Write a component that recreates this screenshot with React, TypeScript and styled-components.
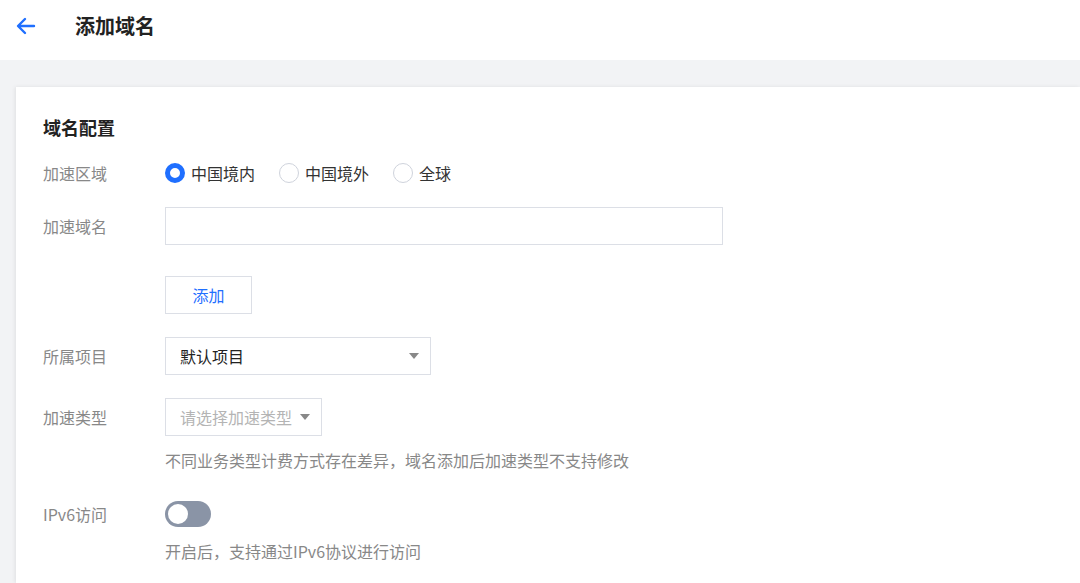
import React, { useState } from 'react';
import styled, { createGlobalStyle } from 'styled-components';

const GlobalStyle = createGlobalStyle`
  html, body {
    margin: 0;
    padding: 0;
    background: #f2f3f5;
    font-family: "Noto Sans CJK SC", "Noto Sans", sans-serif;
    overflow: hidden;
  }
`;

const Page = styled.div`
  width: 1080px;
  height: 583px;
  display: flex;
  flex-direction: column;
  background: #f2f3f5;
  overflow: hidden;
`;

const Header = styled.div`
  height: 60px;
  flex-shrink: 0;
  background: #fff;
  display: flex;
  align-items: flex-start;
  box-sizing: border-box;
  padding: 14px 0 0 15px;
  gap: 38px;
`;

const BackButton = styled.button`
  border: none;
  background: none;
  padding: 0;
  display: flex;
  margin-top: 1px;
  cursor: pointer;
`;

const Title = styled.h1`
  margin: 0;
  font-size: 20px;
  line-height: 24px;
  font-weight: 700;
  color: #222;
`;

const Body = styled.div`
  padding: 27px 0 0 16px;
  flex: 1;
  min-height: 0;
`;

const Card = styled.div`
  background: #fff;
  height: 100%;
  padding: 26px 0 0 27px;
  box-shadow: -1px 0 4px rgba(0, 0, 0, 0.08);
  box-sizing: border-box;
`;

const SectionTitle = styled.h2`
  margin: 0 0 22px;
  font-size: 18px;
  font-weight: 700;
  color: #222;
  line-height: 28px;
`;

const Row = styled.div<{ $gap?: number }>`
  display: grid;
  grid-template-columns: 122px 1fr;
  align-items: start;
  margin-bottom: ${(p) => p.$gap ?? 23}px;
`;

const Label = styled.div<{ $h?: number }>`
  font-size: 16px;
  color: #888;
  line-height: ${(p) => p.$h ?? 38}px;
`;

const Control = styled.div`
  display: flex;
  flex-direction: column;
  align-items: flex-start;
`;

const RadioGroup = styled.div`
  display: flex;
  align-items: center;
  gap: 24px;
  height: 20px;
`;

const RadioItem = styled.label`
  display: flex;
  align-items: center;
  gap: 6px;
  font-size: 16px;
  color: #333;
  cursor: pointer;
`;

const RadioDot = styled.span<{ $checked: boolean }>`
  width: 20px;
  height: 20px;
  box-sizing: border-box;
  border-radius: 50%;
  border: ${(p) => (p.$checked ? '5px solid #1f6fff' : '1px solid #cfd3dc')};
  background: #fff;
`;

const TextInput = styled.input`
  width: 558px;
  height: 38px;
  box-sizing: border-box;
  border: 1px solid #dcdfe6;
  border-radius: 0;
  outline: none;
  padding: 0 14px;
  font-size: 16px;
  font-family: inherit;
`;

const AddButton = styled.button`
  width: 87px;
  height: 38px;
  border: 1px solid #dcdfe6;
  background: #fff;
  color: #1f6fff;
  font-size: 16px;
  font-family: inherit;
  cursor: pointer;
`;

const Select = styled.div<{ $w: number; $placeholder?: boolean }>`
  width: ${(p) => p.$w}px;
  height: 38px;
  box-sizing: border-box;
  border: 1px solid #dcdfe6;
  display: flex;
  align-items: center;
  justify-content: space-between;
  padding: 0 11px 0 14px;
  font-size: 16px;
  color: ${(p) => (p.$placeholder ? '#b4b4b4' : '#222')};
`;

const Caret = styled.span`
  width: 0;
  height: 0;
  border-left: 5px solid transparent;
  border-right: 5px solid transparent;
  border-top: 6px solid #888;
`;

const Hint = styled.div`
  font-size: 16px;
  color: #888;
  line-height: 24px;
  margin-top: 12px;
`;

const Toggle = styled.button<{ $on: boolean }>`
  position: relative;
  width: 46px;
  height: 26px;
  border: none;
  border-radius: 13px;
  padding: 0;
  background: ${(p) => (p.$on ? '#1f6fff' : '#8a94a6')};
  cursor: pointer;
`;

const Knob = styled.span<{ $on: boolean }>`
  position: absolute;
  top: 3px;
  left: ${(p) => (p.$on ? 23 : 3)}px;
  width: 20px;
  height: 20px;
  border-radius: 50%;
  background: #fff;
`;

const regions = ['中国境内', '中国境外', '全球'];

const App: React.FC = () => {
  const [region, setRegion] = useState('中国境内');
  const [ipv6, setIpv6] = useState(false);

  return (
    <Page>
      <GlobalStyle />
      <Header>
        <BackButton>
          <svg width="22" height="22" viewBox="0 0 22 22" fill="none" stroke="#1f6fff" strokeWidth="2.4" strokeLinecap="round" strokeLinejoin="round">
            <path d="M19 11H3.5M10 4l-7 7 7 7" />
          </svg>
        </BackButton>
        <Title>添加域名</Title>
      </Header>
      <Body>
        <Card>
          <SectionTitle>域名配置</SectionTitle>

          <Row $gap={24}>
            <Label $h={20}>加速区域</Label>
            <RadioGroup>
              {regions.map((r) => (
                <RadioItem key={r} onClick={() => setRegion(r)}>
                  <RadioDot $checked={region === r} />
                  {r}
                </RadioItem>
              ))}
            </RadioGroup>
          </Row>

          <Row $gap={31}>
            <Label>加速域名</Label>
            <TextInput type="text" />
          </Row>

          <Row $gap={23}>
            <span />
            <AddButton>添加</AddButton>
          </Row>

          <Row $gap={23}>
            <Label>所属项目</Label>
            <Select $w={266}>
              默认项目
              <Caret />
            </Select>
          </Row>

          <Row $gap={29}>
            <Label>加速类型</Label>
            <Control>
              <Select $w={157} $placeholder>
                请选择加速类型
                <Caret />
              </Select>
              <Hint>不同业务类型计费方式存在差异，域名添加后加速类型不支持修改</Hint>
            </Control>
          </Row>

          <Row>
            <Label $h={26}>IPv6访问</Label>
            <Control>
              <Toggle $on={ipv6} onClick={() => setIpv6(!ipv6)}>
                <Knob $on={ipv6} />
              </Toggle>
              <Hint>开启后，支持通过IPv6协议进行访问</Hint>
            </Control>
          </Row>
        </Card>
      </Body>
    </Page>
  );
};

export default App;
